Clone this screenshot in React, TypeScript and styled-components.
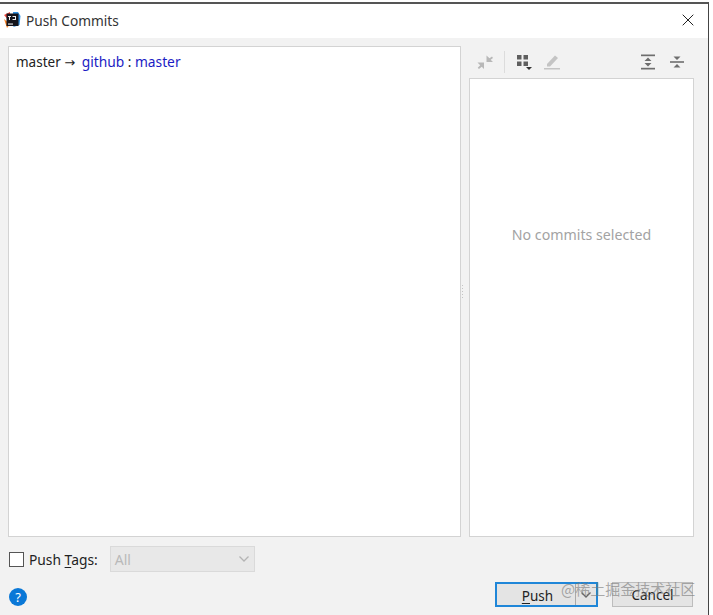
import React from "react";
import styled, { createGlobalStyle } from "styled-components";

const Global = createGlobalStyle`
  html, body { margin: 0; padding: 0; background: #fff; }
  #root { width: 713px; height: 615px; overflow: hidden; }
  * { box-sizing: border-box; }
`;

const Page = styled.div`
  width: 713px;
  height: 615px;
  padding: 2px 4px 0 0;
  background: #fff;
  font-family: "Noto Sans", "Open Sans", "Liberation Sans", sans-serif;
  color: #222;
`;

const Window = styled.div`
  position: relative;
  width: 709px;
  height: 613px;
  border-top: 2px solid #555;
  border-right: 1px solid #444;
  display: flex;
  flex-direction: column;
  background: #f2f2f2;
`;

const TitleBar = styled.div`
  height: 34px;
  flex: none;
  background: #fff;
  display: flex;
  align-items: center;
  padding: 0 14px 2px 3px;
  gap: 5px;
`;

const Title = styled.div`
  font-size: 13.700px;
  flex: 1;
  color: #333;
`;

const Body = styled.div`
  flex: 1;
  display: flex;
  flex-direction: column;
  padding: 8px 14px 0 8px;
`;

const Split = styled.div`
  height: 491px;
  display: flex;
`;

const LeftPanel = styled.div`
  width: 453px;
  flex: none;
  background: #fff;
  border: 1px solid #d3d3d3;
  padding: 5px 7px;
  font-size: 13.5px;
  line-height: 20px;
  color: #222;
`;

const Arrow = styled.span`
  font-family: "DejaVu Sans", sans-serif;
  font-size: 13px;
  margin-right: 3px;
`;

const Blue = styled.span`
  color: #1c1cc4;
  font-size: 13.8px;
`;

const Handle = styled.div`
  width: 8px;
  flex: none;
  display: flex;
  align-items: center;
  justify-content: center;
  padding-right: 4px;
`;

const Grip = styled.div`
  width: 4px;
  height: 16px;
  flex: none;
  background-image: radial-gradient(#c4c4c4 1px, transparent 1px);
  background-size: 3px 3px;
`;

const RightColumn = styled.div`
  flex: 1;
  display: flex;
  flex-direction: column;
`;

const Toolbar = styled.div`
  height: 32px;
  flex: none;
  display: flex;
  align-items: center;
  padding: 0 9px 0 7px;
  gap: 8px;
`;

const ToolSep = styled.div`
  width: 1px;
  height: 22px;
  background: #dcdcdc;
  margin: 0 3px 0 2px;
`;

const EditSlot = styled.div`
  display: flex;
  margin-left: 1px;
`;

const ToolPair = styled.div`
  display: flex;
  align-items: center;
  gap: 13px;
  margin-left: auto;
`;

const Details = styled.div`
  flex: 1;
  background: #fff;
  border: 1px solid #d3d3d3;
  display: flex;
  justify-content: center;
  padding-top: 146px;
  font-size: 14.200px;
  color: #a3a3a3;
  line-height: 20px;
`;

const OptionsRow = styled.div`
  height: 36px;
  margin-top: 4px;
  flex: none;
  display: flex;
  align-items: center;
  padding: 0 1px;
`;

const CheckBox = styled.div`
  width: 15px;
  height: 15px;
  background: #fff;
  border: 1px solid #555;
  margin-right: 5px;
`;

const TagLabel = styled.div`
  font-size: 13.800px;
  color: #222;
  margin-right: 12px;
`;

const Key = styled.span`
  text-decoration: underline;
  text-underline-offset: 2px;
`;

const Select = styled.div`
  width: 145px;
  height: 26px;
  background: #e8e8e8;
  border: 1px solid #dadada;
  display: flex;
  align-items: center;
  justify-content: space-between;
  padding: 0 4px;
  font-size: 14px;
  color: #b9b9b9;
`;

const Footer = styled.div`
  flex: 1;
  display: flex;
  justify-content: space-between;
  align-items: flex-start;
  padding: 5px 0 0 1px;
`;

const Help = styled.div`
  width: 18px;
  height: 18px;
  margin-top: 6px;
  border-radius: 50%;
  background: #0a78d7;
  color: #fff;
  font-size: 13px;
  line-height: 18px;
  text-align: center;
`;

const Buttons = styled.div`
  display: flex;
  gap: 14px;
  margin-right: 1px;
`;

const PushButton = styled.div`
  width: 103px;
  height: 25px;
  border: 2px solid #1f86d8;
  background: #e4e4e4;
  display: flex;
  font-size: 13.5px;
  color: #222;
`;

const PushLabel = styled.div`
  flex: 1;
  text-align: center;
  line-height: 24px;
  border-right: 1px solid #a9a9a9;
  padding-left: 3px;
`;

const PushArrow = styled.div`
  width: 20px;
  display: flex;
  align-items: center;
  justify-content: center;
`;

const CancelButton = styled.div`
  width: 81px;
  height: 25px;
  border: 1px solid #bdbdbd;
  background: #e4e4e4;
  font-size: 13.5px;
  line-height: 25px;
  text-align: center;
  color: #222;
`;

const Watermark = styled.div`
  position: absolute;
  left: 561px;
  top: 575px;
  font-family: "Noto Sans CJK SC", "Noto Sans", sans-serif;
  font-size: 15px;
  line-height: 20px;
  color: rgba(120, 120, 120, 0.62);
  white-space: nowrap;
`;

const Chevron = ({ color }: { color: string }) => (
  <svg width="12" height="8" viewBox="0 0 12 8" fill="none">
    <path d="M1.5 1.5 6 6l4.500-4.500" stroke={color} strokeWidth="1.3" />
  </svg>
);

const AppIcon = () => (
  <svg width="18" height="18" viewBox="0 0 18 18">
    <path d="M1 4 7 1v10z" fill="#f0483e" />
    <path d="M1 8l6 5-3 4z" fill="#fc801d" />
    <path d="M10 1h5l2.500 4-1 9-6 2z" fill="#2f8fe0" />
    <rect x="3.500" y="2.500" width="12" height="12.500" fill="#14141c" />
    <rect x="5" y="12.500" width="5" height="1.100" fill="#eee" />
    <path d="M5 5h3v.900H7V9H6V5.900H5zM9.500 5h3.500v4H9.500v-.900h2.500V5.900H9.500z" fill="#eee" />
  </svg>
);

const CloseIcon = () => (
  <svg width="12" height="12" viewBox="0 0 12 12">
    <path d="M.7.700l10.600 10.600M11.300.700.700 11.300" stroke="#222" strokeWidth="1" />
  </svg>
);

const CollapseIcon = () => (
  <svg width="18" height="18" viewBox="0 0 18 18" fill="#b8b8b8">
    <path d="M10.500 2.500v6.500H17l-2.300-2.300 2.300-1.700-1-1.500-2.500 1.800z" />
    <path d="M8 9.500V16l-2.300-2.300L3 16l-1.300-1.300 2.500-2.500L1.500 9.500z" />
  </svg>
);

const GroupIcon = () => (
  <svg width="18" height="18" viewBox="0 0 18 18">
    <g fill="#5f5f5f">
      <rect x="1" y="2" width="4.500" height="4.500" />
      <rect x="7.500" y="2" width="4.500" height="4.500" />
      <rect x="1" y="8.500" width="4.500" height="4.500" />
      <rect x="7.500" y="8.500" width="4.500" height="4.500" />
    </g>
    <path d="M10 14h6l-3 3z" fill="#333" />
  </svg>
);

const EditIcon = () => (
  <svg width="18" height="18" viewBox="0 0 18 18" fill="#c4c4c4">
    <path d="M4 11 12 2.500 15 5l-8 8.500H4z" />
    <rect x="1" y="15" width="16" height="1.500" />
  </svg>
);

const ExpandIcon = () => (
  <svg width="16" height="18" viewBox="0 0 16 18" fill="#6e6e6e">
    <rect x="1" y="1.500" width="14" height="1.700" />
    <rect x="1" y="14.800" width="14" height="1.700" />
    <path d="M8 4.500 11.500 8h-7zM8 13.500 4.500 10h7z" />
  </svg>
);

const CollapseAllIcon = () => (
  <svg width="16" height="18" viewBox="0 0 16 18" fill="#6e6e6e">
    <rect x="1" y="8.200" width="14" height="1.600" />
    <path d="M8 7 4.500 3.500h7zM8 11l3.500 3.500h-7z" />
  </svg>
);

export default function App() {
  return (
    <>
      <Global />
      <Page>
        <Window>
          <TitleBar>
            <AppIcon />
            <Title>Push Commits</Title>
            <CloseIcon />
          </TitleBar>
          <Body>
            <Split>
              <LeftPanel>
                master <Arrow>→</Arrow> <Blue>github</Blue> : <Blue>master</Blue>
              </LeftPanel>
              <Handle>
                <Grip />
              </Handle>
              <RightColumn>
                <Toolbar>
                  <CollapseIcon />
                  <ToolSep />
                  <GroupIcon />
                  <EditSlot>
                    <EditIcon />
                  </EditSlot>
                  <ToolPair>
                    <ExpandIcon />
                    <CollapseAllIcon />
                  </ToolPair>
                </Toolbar>
                <Details>No commits selected</Details>
              </RightColumn>
            </Split>
            <OptionsRow>
              <CheckBox />
              <TagLabel>
                Push <Key>T</Key>ags:
              </TagLabel>
              <Select>
                All
                <Chevron color="#b4b4b4" />
              </Select>
            </OptionsRow>
            <Footer>
              <Help>?</Help>
              <Buttons>
                <PushButton>
                  <PushLabel>
                    <Key>P</Key>ush
                  </PushLabel>
                  <PushArrow>
                    <Chevron color="#666" />
                  </PushArrow>
                </PushButton>
                <CancelButton>Cancel</CancelButton>
              </Buttons>
            </Footer>
          </Body>
          <Watermark>@稀土掘金技术社区</Watermark>
        </Window>
      </Page>
    </>
  );
}
